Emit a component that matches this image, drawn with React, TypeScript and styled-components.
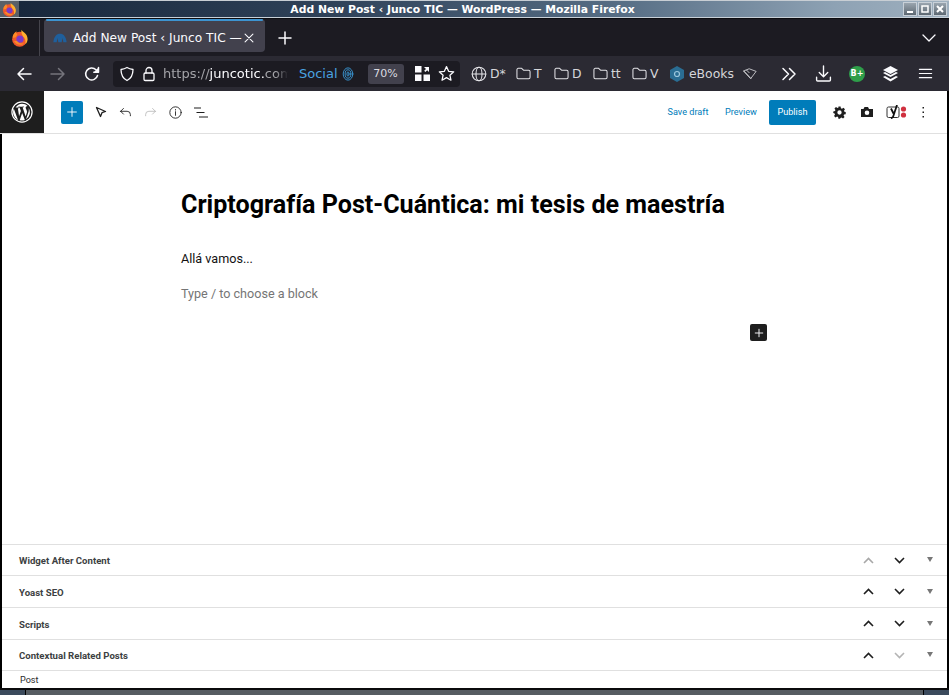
import React from "react";
import styled, { createGlobalStyle } from "styled-components";

const Global = createGlobalStyle`
  html, body { margin: 0; padding: 0; background: #000; }
  body { width: 949px; height: 695px; overflow: hidden; font-family: "DejaVu Sans", sans-serif; }
  * { box-sizing: border-box; }
  svg { flex: none; }
`;

const Page = styled.div`
  width: 949px; height: 695px; display: flex; flex-direction: column; overflow: hidden;
`;

const TitleBar = styled.div`
  height: 18px; flex: none; position: relative; display: flex; align-items: center;
  background: linear-gradient(90deg, #17263a 0%, #2f4259 35%, #566d84 65%, #8ea2b4 88%, #9fb0bf 100%);
  border-top: 1px solid #c8ced4; border-bottom: 1px solid #c8d0d8;
  padding-right: 2px;
`;
const TitleIcon = styled.div`
  width: 19px; height: 16px; flex: none; background: #5a6068; display: flex; align-items: center; justify-content: center;
`;
const TitleText = styled.div`
  flex: 1; text-align: center; color: #fff; font: bold 10.8px/15px "DejaVu Sans", sans-serif; padding-left: 4px;
`;
const WinBtn = styled.div`
  width: 14px; height: 14px; margin-left: 1px; flex: none; background: linear-gradient(#9aa5af, #5d6872);
  border: 1px solid #c8d0d8; display: flex; align-items: center; justify-content: center;
`;

const TabBar = styled.div`
  height: 38px; flex: none; background: #1c1b22; border-top: 1px solid #0c0c10; display: flex; align-items: center;
`;
const FoxSlot = styled.div`
  width: 40px; height: 36px; flex: none; display: flex; align-items: center; justify-content: center; border-right: 1px solid #45444c;
`;
const Tab = styled.div`
  width: 221px; height: 33px; margin: 0 0 0 4px; align-self: flex-start; flex: none; background: #42414d; border-radius: 4px;
  display: flex; align-items: center; padding: 4px 9px 0 8px; color: #fbfbfe; font-size: 12.2px; position: relative; white-space: nowrap;
  &::before { content: ""; position: absolute; left: 2px; right: 2px; top: 0; height: 2px; background: #3d94d1; border-radius: 1px; }
`;
const TabLabel = styled.span`
  margin-left: 5px; flex: 1; min-width: 0;
`;
const NewTab = styled.div`
  width: 38px; display: flex; justify-content: center; margin-left: 1px; flex: none;
`;
const Grow = styled.div`flex: 1;`;
const ListTabs = styled.div`
  width: 36px; display: flex; justify-content: center; flex: none; margin-right: 2px;
`;

const NavBar = styled.div`
  height: 35px; flex: none; background: #2b2a33; display: flex; align-items: center; color: #fbfbfe;
`;
const Slot = styled.div<{ $w: number }>`
  width: ${p => p.$w}px; height: 24px; flex: none; display: flex; align-items: center; justify-content: center;
`;
const UrlBar = styled.div`
  width: 347px; height: 26px; margin-left: 4px; flex: none; background: #1c1b22; border-radius: 4px; display: flex; align-items: center;
  font-size: 13px; white-space: nowrap;
`;
const Url = styled.div`
  width: 125px; margin-left: 6px; overflow: hidden; color: #fbfbfe; flex: none;
  mask-image: linear-gradient(90deg, #000 90%, transparent 100%);
`;
const UrlDim = styled.span`color: #a3a3a8;`;
const Social = styled.span`color: #4aa3e0; margin-left: 11px; flex: none;`;
const Zoom = styled.div`
  width: 36px; height: 20px; margin-left: 10px; border-radius: 3px; background: #42414d; color: #dcdce0; font-size: 11px;
  display: flex; align-items: center; justify-content: center; flex: none;
`;
const BookmarkRow = styled.div`
  display: flex; align-items: center; flex: none; height: 24px; font-size: 12.4px; color: #d6d6da; white-space: nowrap; margin-left: 3px;
`;
const Bookmark = styled.div<{ $w: number; $gap?: number }>`
  width: ${p => p.$w}px; flex: none; display: flex; align-items: center; gap: ${p => p.$gap ?? 3}px; overflow: hidden;
`;
const Badge = styled.div`
  width: 16px; height: 16px; border-radius: 50%; background: #2e9e4a; color: #fff; font: bold 8px/16px "DejaVu Sans", sans-serif; text-align: center;
`;

const Window = styled.div`
  flex: 1; min-height: 0; background: #fff; margin: 0 2px; display: flex; flex-direction: column; font-family: Roboto, sans-serif;
`;
const EditorBar = styled.div`
  height: 43px; flex: none; display: flex; align-items: center; border-bottom: 1px solid #e0e0e0; margin-left: -2px;
`;
const WpLogo = styled.div`
  width: 44px; height: 42px; background: #1e1e1e; display: flex; align-items: center; justify-content: center; flex: none;
`;
const Inserter = styled.div`
  width: 22px; height: 23px; margin-left: 17px; margin-right: 5px; border-radius: 2px; background: #007cba; display: flex; align-items: center; justify-content: center; flex: none;
`;
const Tool = styled.div<{ $w?: number }>`
  width: ${p => p.$w ?? 25}px; height: 24px; flex: none; display: flex; align-items: center; justify-content: center;
`;
const LinkBtn = styled.div<{ $w: number }>`
  width: ${p => p.$w}px; flex: none; text-align: center; color: #007cba; font-size: 9.1px;
`;
const Publish = styled.div`
  width: 47px; height: 25px; margin-left: 7px; margin-right: 10px; flex: none; border-radius: 2px; background: #007cba; color: #fff; font-size: 9.1px;
  display: flex; align-items: center; justify-content: center;
`;

const Canvas = styled.div`
  flex: 1; min-height: 0; padding: 52px 0 0 179px; position: relative;
`;
const PostTitle = styled.h1`
  margin: 0; color: #000; font: 700 25.1px/38px Roboto, sans-serif; white-space: nowrap;
`;
const Para = styled.p`
  margin: 25px 0 0; color: #111; font: 400 12.6px/20px Roboto, sans-serif;
`;
const Placeholder = styled.p`
  margin: 15px 0 0; color: #757575; font: 400 12.6px/20px Roboto, sans-serif;
`;
const BlockAdd = styled.div`
  position: absolute; left: 748px; top: 190px; width: 17px; height: 17px; border-radius: 2px; background: #1e1e1e; display: flex; align-items: center; justify-content: center;
`;

const Panel = styled.div<{ $h: number }>`
  height: ${p => p.$h}px; flex: none; border-top: 1px solid #e0e0e0; display: flex; align-items: center; padding-left: 17px;
`;
const PanelTitle = styled.div`
  flex: 1; font: 700 9.6px/12px Roboto, sans-serif; color: #3d3f42; padding-top: 2px;
`;
const PanelBtn = styled.div`
  width: 31px; display: flex; justify-content: center; align-items: center; flex: none; height: 16px;
`;
const Caret = styled.div`
  width: 0; height: 0; border-left: 3px solid transparent; border-right: 3px solid transparent; border-top: 5px solid #777;
`;
const CaretSlot = styled.div`
  width: 32px; display: flex; padding-left: 12px; flex: none; margin-top: -1px;
`;
const Footer = styled.div`
  height: 18px; flex: none; border-top: 1px solid #e0e0e0; padding: 1px 0 0 18px; color: #2c2c2c; font: 400 9.1px/16px Roboto, sans-serif;
`;
const BottomEdge = styled.div`
  height: 7px; flex: none; background: linear-gradient(#0b0b0d 0 2px, #565c62 2px 100%); display: flex;
`;
const EdgeLeft = styled.div`width: 26px; background: #3b4a5c; margin-top: 2px; border-right: 1px solid #000;`;
const EdgeRight = styled.div`width: 26px; margin-left: auto; margin-top: 2px; background: #3b4a5c; border-left: 1px solid #000;`;

const Fox = ({ s = 18 }: { s?: number }) => (
  <svg width={s} height={s} viewBox="0 0 24 24">
    <circle cx="11.500" cy="13.500" r="10" fill="#f0592b" />
    <path d="M14 1c1 3 7 4 8 11 .6 4-1 7-3 8 1-4 0-8-3-10-1-3-3-5-2-9z" fill="#ffb02e" />
    <path d="M2.500 9c1-3 3-5 5-6-1 2 0 3 1 4l-2 4-4 1z" fill="#ff8a26" />
    <circle cx="12" cy="13.500" r="4.800" fill="#7b3ac8" />
    <path d="M4 16c2 5 9 7 14 3-4 1-8 0-10-3z" fill="#f98a2a" />
  </svg>
);
const Line = ({ w = 16, c = "#fbfbfe", sw = 1.5, children }: { w?: number; c?: string; sw?: number; children: React.ReactNode }) => (
  <svg width={w} height={w} viewBox="0 0 16 16" fill="none" stroke={c} strokeWidth={sw} strokeLinecap="round" strokeLinejoin="round">{children}</svg>
);
const FolderIcon = () => (
  <Line w={15} c="#e4e4e8" sw={1.100}><path d="M1 4a1.500 1.500 0 0 1 1.500-1.500h3.500l2 2h5.500a1.500 1.500 0 0 1 1.500 1.500v6a1.500 1.500 0 0 1-1.500 1.500h-11A1.500 1.500 0 0 1 1 12z" /></Line>
);
const Chevron = ({ up, c = "#1e1e1e" }: { up?: boolean; c?: string }) => (
  <svg width="11" height="7" viewBox="0 0 11 7" fill="none" stroke={c} strokeWidth="1.600">
    <path d={up ? "M1 6l4.500-4.500L10 6" : "M1 1l4.500 4.500L10 1"} />
  </svg>
);

const panels = [
  { t: "Widget After Content", up: false, down: true, h: 31 },
  { t: "Yoast SEO", up: true, down: true, h: 32 },
  { t: "Scripts", up: true, down: true, h: 32 },
  { t: "Contextual Related Posts", up: true, down: false, h: 31 },
];

export default function App() {
  return (
    <Page>
      <Global />
      <TitleBar>
        <TitleIcon><Fox s={15} /></TitleIcon>
        <TitleText>Add New Post ‹ Junco TIC — WordPress — Mozilla Firefox</TitleText>
        <WinBtn><svg width="8" height="8"><rect x="1" y="6" width="6" height="2" fill="#fff" /></svg></WinBtn>
        <WinBtn><svg width="8" height="8"><rect x="1" y="1" width="6" height="6" fill="none" stroke="#fff" strokeWidth="1.500" /></svg></WinBtn>
        <WinBtn><svg width="8" height="8" stroke="#fff" strokeWidth="2"><path d="M1 1l6 6M7 1l-6 6" /></svg></WinBtn>
      </TitleBar>

      <TabBar>
        <FoxSlot><Fox /></FoxSlot>
        <Tab>
          <svg width="16" height="10" viewBox="0 0 16 12"><path d="M0 11C1 4 4 1 8 1s7 3 8 10h-4l-1-5-1 5H6L5 6l-1 5z" fill="#1f5f9c" /></svg>
          <TabLabel>Add New Post ‹ Junco TIC —</TabLabel>
          <Line w={14} sw={1.200}><path d="M3.500 3.500l9 9M12.500 3.500l-9 9" /></Line>
        </Tab>
        <NewTab><Line w={16}><path d="M8 2v12M2 8h12" /></Line></NewTab>
        <Grow />
        <ListTabs><Line w={16} sw={1.300}><path d="M2 5l6 6 6-6" /></Line></ListTabs>
      </TabBar>

      <NavBar>
        <Slot $w={7} />
        <Slot $w={34}><Line><path d="M15 8H2M7.500 2.500L2 8l5.500 5.500" /></Line></Slot>
        <Slot $w={34}><Line c="#75747c"><path d="M1 8h13M8.500 2.500L14 8l-5.500 5.500" /></Line></Slot>
        <Slot $w={34}><Line><path d="M13.500 9.500A6 6 0 1 1 12 3.800L14 6" /><path d="M14.500 1.500V6.300H9.800" fill="#fbfbfe" /></Line></Slot>
        <UrlBar>
          <Slot $w={28}><Line w={16} sw={1.300}><path d="M8 1.500c2 1.200 3.800 1.700 6 2 0 5-1.500 8.800-6 11-4.500-2.200-6-6-6-11 2.200-.3 4-.8 6-2z" /></Line></Slot>
          <Slot $w={16}><Line w={16} sw={1.300}><rect x="3" y="7" width="10" height="7.500" rx="1.200" /><path d="M5 7V4.500a3 3 0 0 1 6 0V7" /></Line></Slot>
          <Url><UrlDim>https://</UrlDim>juncotic.<UrlDim>com</UrlDim></Url>
          <Social>Social</Social>
          <Slot $w={20}><Line w={14} c="#3b9fe0" sw={1}><ellipse cx="8" cy="8" rx="5.500" ry="7" /><ellipse cx="8" cy="8" rx="3.300" ry="4.800" /><ellipse cx="8" cy="8" rx="1.200" ry="2.500" /></Line></Slot>
          <Zoom>70%</Zoom>
          <Slot $w={37}>
            <svg width="15" height="15" viewBox="0 0 15 15" fill="#fbfbfe"><rect x="0" y="0" width="6.500" height="6.500" /><rect x="0" y="8.500" width="6.500" height="6.500" /><rect x="8.500" y="8.500" width="6.500" height="6.500" /><path d="M9 1h5v5l-1.800-1.800-1.800 1.800-1.200-1.200 1.800-1.800z" /></svg>
          </Slot>
          <Slot $w={11}><Line w={17} sw={1.200}><path d="M8 1.500l2 4.400 4.800.5-3.600 3.200 1 4.700L8 11.900l-4.200 2.400 1-4.700L1.200 6.400 6 5.900z" /></Line></Slot>
        </UrlBar>
        <BookmarkRow>
          <Slot $w={8} />
          <Bookmark $w={45}><Line c="#e4e4e8" sw={1.100}><circle cx="8" cy="8" r="6.800" /><ellipse cx="8" cy="8" rx="3" ry="6.800" /><path d="M1.200 8h13.600" /></Line><span>D*</span></Bookmark>
          <Bookmark $w={38}><FolderIcon /><span>T</span></Bookmark>
          <Bookmark $w={39}><FolderIcon /><span>D</span></Bookmark>
          <Bookmark $w={39}><FolderIcon /><span>tt</span></Bookmark>
          <Bookmark $w={38}><FolderIcon /><span>V</span></Bookmark>
          <Bookmark $w={72} $gap={5}>
            <svg width="14" height="16" viewBox="0 0 14 16"><path d="M7 0l7 4v8l-7 4-7-4V4z" fill="#2a6d93" /><circle cx="7" cy="8" r="2.500" fill="none" stroke="#9cc8de" strokeWidth="1.200" /></svg>
            <span>eBooks</span>
          </Bookmark>
          <Slot $w={15}><Line w={14} c="#d0d0d4" sw={1}><path d="M1 4.500L7 2l8 3-6 8z M1 4.500L9 13M4 3.500l3 3" /></Line></Slot>
        </BookmarkRow>
        <Slot $w={14} />
        <Slot $w={36}><Line w={16} sw={1.500}><path d="M2 2.500L7.500 8 2 13.500M8.500 2.500L14 8l-5.500 5.500" /></Line></Slot>
        <Slot $w={32}><Line w={17} sw={1.300}><path d="M8 1v9.500M4 7l4 4 4-4M1.500 11.500V14a1 1 0 0 0 1 1h11a1 1 0 0 0 1-1v-2.500" /></Line></Slot>
        <Slot $w={36}><Badge>B+</Badge></Slot>
        <Slot $w={30}>
          <svg width="15" height="16" viewBox="0 0 15 16" fill="#fbfbfe"><path d="M7.500 0L15 4l-7.500 4L0 4z" /><path d="M0 7l2-1 5.500 3 5.500-3 2 1-7.500 4z" /><path d="M0 11l2-1 5.500 3 5.500-3 2 1-7.500 4.500z" /></svg>
        </Slot>
        <Slot $w={40}><Line w={15} sw={1.300}><path d="M1.500 3.500h13M1.500 8h13M1.500 12.500h13" /></Line></Slot>
      </NavBar>

      <Window>
        <EditorBar>
          <WpLogo>
            <svg width="22" height="22" viewBox="0 0 24 24">
              <circle cx="12" cy="12" r="11" fill="none" stroke="#fff" strokeWidth="1.300" />
              <path d="M3 8.300l4.700 12.700a10 10 0 0 1-4.700-12.700zM5 7.200C6.700 4.600 9.200 3 12 3c2.400 0 4.500.9 6 2.400-1.300 0-2.300 1.200-1.900 2.600.5 1.300 1.500 2.500 1.300 4.300l-1.400 4.500-3.300-9.800c.5 0 1-.1 1-.1.600-.1.500-.8 0-.8l-2.600.1-2.600-.1c-.5 0-.6.800 0 .8l.9.100 1.400 3.800-2 5.900L7.500 8l1.100-.1c.5 0 .5-.8 0-.8zM12.200 13l2.900 7.800a9 9 0 0 1-5.600.2zM19.300 7.700a9 9 0 0 1-2.900 12.100l2.500-7.300c.5-1.200.7-2.600.4-4.800z" fill="#fff" />
            </svg>
          </WpLogo>
          <Inserter><Line w={10} sw={1.500}><path d="M8 1v14M1 8h14" /></Line></Inserter>
          <Tool><svg width="12" height="12" viewBox="0 0 12 12" fill="none" stroke="#1e1e1e" strokeWidth="1.300" strokeLinejoin="round"><path d="M1.500 1.500l9 4-3.500 1.200-1.500 3.800z" /></svg></Tool>
          <Tool><Line w={13} c="#1e1e1e" sw={1.100}><path d="M2 6.500h8a4 4 0 0 1 4 4V12M2 6.500l3.500-3.500M2 6.500L5.500 10" /></Line></Tool>
          <Tool><Line w={13} c="#bdbdbd" sw={1.100}><path d="M14 6.500H6a4 4 0 0 0-4 4V12M14 6.500L10.500 3M14 6.500L10.500 10" /></Line></Tool>
          <Tool><Line w={13} c="#1e1e1e" sw={1.100}><circle cx="8" cy="8" r="7" /><path d="M8 7v4.500" /><path d="M8 4.300v.7" /></Line></Tool>
          <Tool><svg width="14" height="11" viewBox="0 0 14 11" stroke="#1e1e1e" strokeWidth="1.200"><path d="M0 1h7M2.500 5.500h8M5 10h9" /></svg></Tool>
          <Grow />
          <LinkBtn $w={64}>Save draft</LinkBtn>
          <LinkBtn $w={42}>Preview</LinkBtn>
          <Publish>Publish</Publish>
          <Tool $w={27}>
            <svg width="13" height="13" viewBox="0 0 24 24" fill="#1e1e1e"><path fillRule="evenodd" d="M10 1h4l.6 3.200 2 .8 2.700-1.800 2.800 2.800-1.800 2.700.8 2L23.500 11v4l-3.200.6-.8 2 1.800 2.700-2.800 2.800-2.700-1.800-2 .8L13 23.500h-3l-.6-3.200-2-.8-2.700 1.800-2.800-2.800 1.800-2.700-.8-2L.5 13v-3l3.200-.6.800-2L2.700 4.700l2.800-2.800 2.700 1.800 2-.8zM12 8a4 4 0 1 0 0 8 4 4 0 0 0 0-8z" /></svg>
          </Tool>
          <Tool $w={28}>
            <svg width="12" height="10" viewBox="0 0 12 10"><path fillRule="evenodd" d="M0 2h2.500l1-2H7l1 2h4v8H0zM6 3.500a2.300 2.300 0 1 0 0 4.600 2.300 2.300 0 0 0 0-4.600z" fill="#1e1e1e" /></svg>
          </Tool>
          <Tool $w={32}>
            <svg width="22" height="14" viewBox="0 0 22 14">
              <rect x="1" y="2" width="12" height="10.500" rx="1.500" fill="none" stroke="#333" strokeWidth="1" />
              <path d="M5 3.500l2.500 5M11 0L7 12 5 13.500" fill="none" stroke="#111" strokeWidth="1.800" />
              <circle cx="17.500" cy="4" r="2.600" fill="#d0303f" />
              <circle cx="17.500" cy="10" r="2.600" fill="#d0303f" />
            </svg>
          </Tool>
          <Tool $w={20}>
            <svg width="3" height="11" viewBox="0 0 3 11" fill="#1e1e1e"><rect x="0.500" y="0" width="1.500" height="1.500" /><rect x="0.500" y="4.500" width="1.500" height="1.500" /><rect x="0.500" y="9" width="1.500" height="1.500" /></svg>
          </Tool>
          <Tool $w={14} />
        </EditorBar>

        <Canvas>
          <PostTitle>Criptografía Post-Cuántica: mi tesis de maestría</PostTitle>
          <Para>Allá vamos...</Para>
          <Placeholder>Type / to choose a block</Placeholder>
          <BlockAdd><Line w={10} sw={1.500}><path d="M8 2v12M2 8h12" /></Line></BlockAdd>
        </Canvas>

        {panels.map(p => (
          <Panel key={p.t} $h={p.h}>
            <PanelTitle>{p.t}</PanelTitle>
            <PanelBtn><Chevron up c={p.up ? "#1e1e1e" : "#a8a8a8"} /></PanelBtn>
            <PanelBtn><Chevron c={p.down ? "#1e1e1e" : "#b4b4b4"} /></PanelBtn>
            <CaretSlot><Caret /></CaretSlot>
          </Panel>
        ))}
        <Footer>Post</Footer>
      </Window>
      <BottomEdge><EdgeLeft /><EdgeRight /></BottomEdge>
    </Page>
  );
}
